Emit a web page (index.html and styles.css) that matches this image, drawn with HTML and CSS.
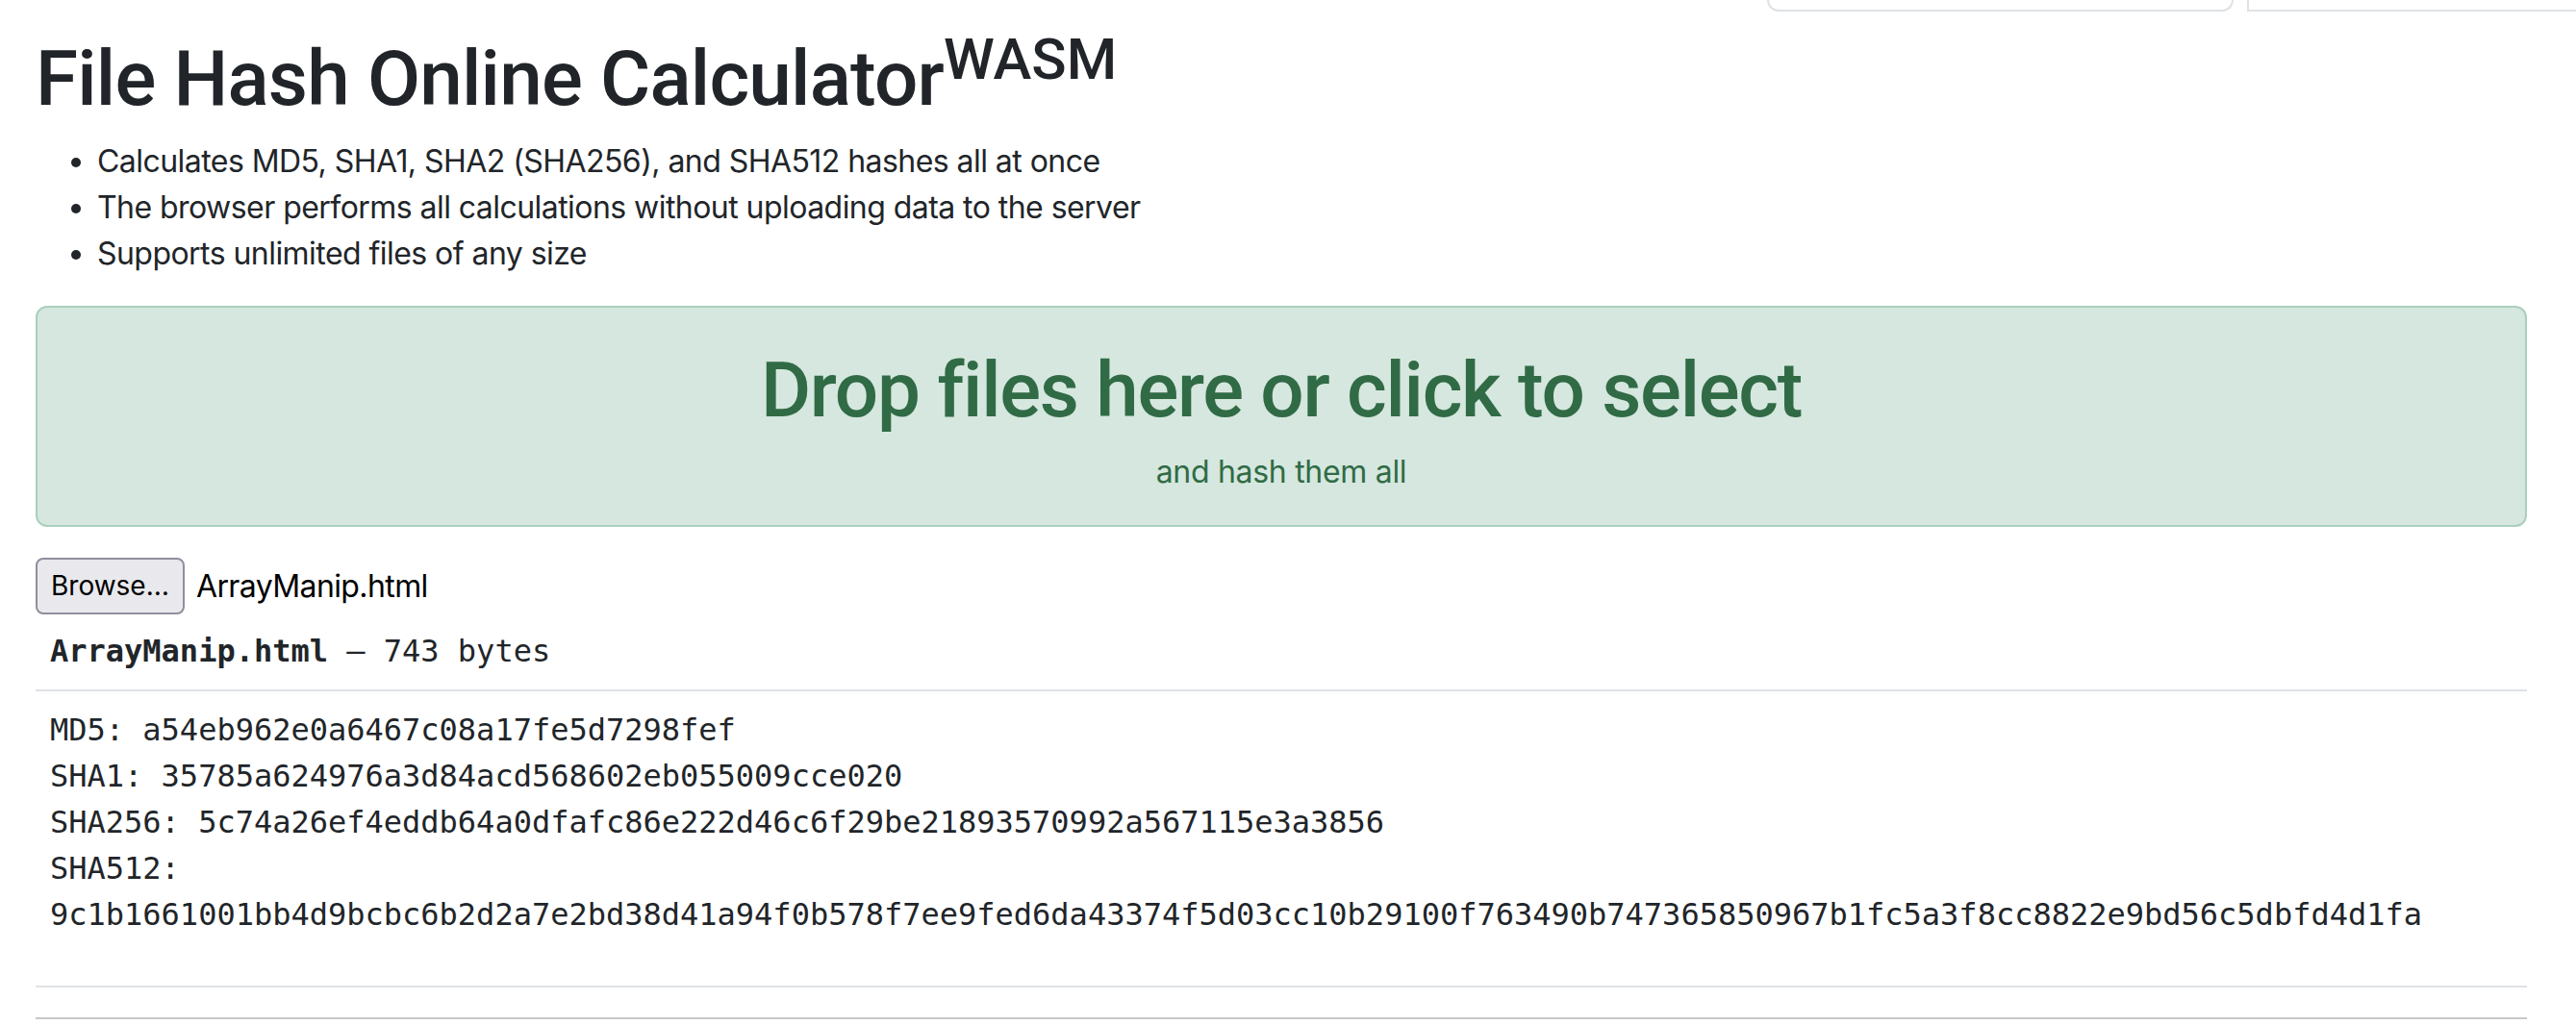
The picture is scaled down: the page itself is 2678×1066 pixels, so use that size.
FILE: index.html
```html
<!DOCTYPE html>
<html lang="en">
<head>
<meta charset="utf-8">
<title>File Hash Online Calculator</title>
<link rel="stylesheet" href="styles.css">
</head>
<body>
<div class="page">
  <div class="topbar">
    <div class="topbox topbox-a"></div>
    <div class="topbox topbox-b"></div>
  </div>
  <h1 class="title">File Hash Online Calculator<sup class="wasm">WASM</sup></h1>
  <ul class="features">
    <li>Calculates MD5, SHA1, SHA2 (SHA256), and SHA512 hashes all at once</li>
    <li>The browser performs all calculations without uploading data to the server</li>
    <li>Supports unlimited files of any size</li>
  </ul>
  <div class="dropzone">
    <div class="drop-title">Drop files here or click to select</div>
    <div class="drop-sub">and hash them all</div>
  </div>
  <div class="picker">
    <span class="browse">Browse…</span>
    <span class="picked">ArrayManip.html</span>
  </div>
  <div class="result">
    <div class="file-head"><b>ArrayManip.html</b> – 743 bytes</div>
    <div class="hashes">
      <div>MD5: a54eb962e0a6467c08a17fe5d7298fef</div>
      <div>SHA1: 35785a624976a3d84acd568602eb055009cce020</div>
      <div>SHA256: 5c74a26ef4eddb64a0dfafc86e222d46c6f29be21893570992a567115e3a3856</div>
      <div>SHA512:</div>
      <div>9c1b1661001bb4d9bcbc6b2d2a7e2bd38d41a94f0b578f7ee9fed6da43374f5d03cc10b29100f763490b747365850967b1fc5a3f8cc8822e9bd56c5dbfd4d1fa</div>
    </div>
  </div>
  <div class="bottom-rule"></div>
</div>
</body>
</html>
```
FILE: styles.css
```css
html, body {
  margin: 0;
  padding: 0;
  background: #ffffff;
}
body {
  font-family: Inter, "Noto Sans", "Liberation Sans", sans-serif;
  color: #212529;
  font-size: 32px;
  line-height: 1.5;
}
.page {
  padding: 0 51px 0 37px;
}
.topbar {
  display: flex;
  justify-content: flex-end;
  height: 12px;
  margin-right: -51px;
  gap: 14px;
  align-items: flex-end;
}
.topbox {
  height: 40px;
  border: 2px solid #dee2e6;
  border-top: none;
  background: #fff;
  flex: none;
}
.topbox-a {
  width: 481px;
  border-radius: 0 0 12px 12px;
}
.topbox-b {
  width: 340px;
  border-right: none;
}
.title {
  margin: 22px 0 0 0;
  font-family: Roboto, Inter, sans-serif;
  font-size: 80px;
  font-weight: 500;
  line-height: 1.2;
  letter-spacing: -0.8px;
}
.wasm {
  font-size: 60px;
  line-height: 0;
  position: relative;
  vertical-align: baseline;
  top: -0.45em;
  letter-spacing: 0;
}
.features {
  margin: 14px 0 0 0;
  padding-left: 64px;
  letter-spacing: -0.55px;
}
.features li {
  line-height: 48px;
}
.dropzone {
  margin-top: 30px;
  border: 2px solid #abcfbd;
  background: #d5e7de;
  border-radius: 12px;
  color: #306b46;
  text-align: center;
  padding: 38px 0 31px;
}
.drop-title {
  font-family: Roboto, Inter, sans-serif;
  font-size: 80px;
  font-weight: 500;
  line-height: 96px;
  letter-spacing: -1.3px;
}
.drop-sub {
  font-size: 32px;
  line-height: 48px;
  margin-top: 13px;
  letter-spacing: -0.3px;
}
.picker {
  margin-top: 32px;
  display: flex;
  align-items: center;
  gap: 12px;
}
.browse {
  display: inline-block;
  box-sizing: border-box;
  height: 59px;
  padding: 0 14px;
  line-height: 55px;
  border: 2px solid #8f8f9d;
  border-radius: 8px;
  background: #e9e9ed;
  color: #000;
  font-size: 28px;
}
.picked {
  color: #000;
  letter-spacing: -0.6px;
}
.result {
  margin-top: 14px;
  font-family: "DejaVu Sans Mono", "Liberation Mono", monospace;
  font-size: 32px;
}
.file-head {
  padding: 0 15px;
  line-height: 48px;
  border-bottom: 2px solid #dee2e6;
  padding-bottom: 16px;
}
.file-head b {
  font-weight: 700;
}
.hashes {
  padding: 16px 15px 50px;
  line-height: 48px;
  border-bottom: 2px solid #dee2e6;
}
.bottom-rule {
  margin-top: 31px;
  border-top: 2px solid #c8c8c8;
}
```
